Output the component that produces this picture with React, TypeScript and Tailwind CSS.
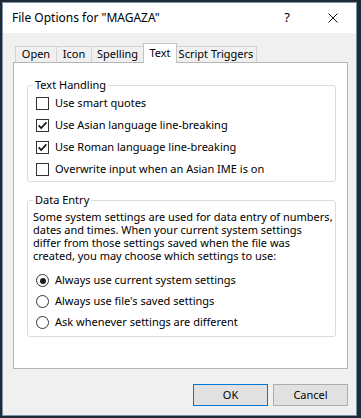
import React from 'react';

const Checkbox = ({ checked }: { checked?: boolean }) => (
  <span className="w-[13px] h-[13px] border border-[#333333] bg-white flex items-center justify-center shrink-0">
    {checked && (
      <svg width="11" height="11" viewBox="0 0 11 11">
        <path d="M1.6 5.4 L4.2 8.1 L9.4 2.4" fill="none" stroke="#111" strokeWidth="1.6" />
      </svg>
    )}
  </span>
);

const Radio = ({ checked }: { checked?: boolean }) => (
  <span className="w-[13px] h-[13px] rounded-full border border-[#333333] bg-white flex items-center justify-center shrink-0">
    {checked && <span className="w-[6px] h-[6px] rounded-full bg-[#1a1a1a]" />}
  </span>
);

const tabs = [
  { label: 'Open', w: 'w-[42px]' },
  { label: 'Icon', w: 'w-[36px]' },
  { label: 'Spelling', w: 'w-[53px]' },
  { label: 'Text', w: 'w-[34px]', active: true },
  { label: 'Script Triggers', w: 'w-[82px]' },
];

const App = () => {
  return (
    <div className="w-[361px] h-[418px] bg-[#1e2a36] pl-[2px] pt-[2px] font-['Noto_Sans',sans-serif] text-[11px] text-black">
      <div className="w-[355px] h-[414px] border border-[#7f93a8] bg-[#f0f0f0] flex flex-col">
        {/* title bar */}
        <div className="h-[30px] bg-white flex items-center shrink-0">
          <span className="flex-1 pl-[9px] text-[12px]">File Options for "MAGAZA"</span>
          <span className="w-[46px] text-center text-[13px]">?</span>
          <span className="w-[46px] flex justify-center">
            <svg width="10" height="10" viewBox="0 0 10 10">
              <path d="M0.5 0.5 L9.5 9.5 M9.5 0.5 L0.5 9.5" stroke="#111" strokeWidth="1" />
            </svg>
          </span>
        </div>

        <div className="pl-[10px] pr-[8px] pt-[10px]">
          {/* tabs */}
          <div className="flex items-end h-[19px] ml-[2px]">
            {tabs.map((t) =>
              t.active ? (
                <div
                  key={t.label}
                  className={`${t.w} h-[20px] -mb-px relative z-10 bg-white border border-b-0 border-[#c4c4c4] flex items-center justify-center -mx-px`}
                >
                  {t.label}
                </div>
              ) : (
                <div
                  key={t.label}
                  className={`${t.w} h-[16px] bg-[#f0f0f0] border border-b-0 border-[#d4d4d4] -ml-px first:ml-0 flex items-center justify-center`}
                >
                  {t.label}
                </div>
              )
            )}
          </div>

          {/* panel */}
          <div className="h-[307px] bg-white border border-[#b4b4b4] pl-[13px] pr-[11px] pt-[15px]">
            <fieldset className="border border-[#dcdcdc] rounded-[3px] pl-[5px] pb-[1px]">
              <legend className="px-[2px] leading-[14px]">Text Handling</legend>
              {[
                { label: 'Use smart quotes' },
                { label: 'Use Asian language line-breaking', checked: true },
                { label: 'Use Roman language line-breaking', checked: true },
                { label: 'Overwrite input when an Asian IME is on' },
              ].map((r) => (
                <div key={r.label} className="h-[22px] flex items-center gap-[6px] pl-[3px]">
                  <Checkbox checked={r.checked} />
                  <span>{r.label}</span>
                </div>
              ))}
            </fieldset>

            <fieldset className="mt-[11px] border border-[#dcdcdc] rounded-[3px] pl-[5px] pb-[3px]">
              <legend className="px-[2px] leading-[14px]">Data Entry</legend>
              <p className="leading-[13px] whitespace-nowrap mt-[3px]">
                Some system settings are used for data entry of numbers,
                <br />
                dates and times. When your current system settings
                <br />
                differ from those settings saved when the file was
                <br />
                created, you may choose which settings to use:
              </p>
              <div className="mt-[8px]">
                {[
                  { label: 'Always use current system settings', checked: true },
                  { label: "Always use file's saved settings" },
                  { label: 'Ask whenever settings are different' },
                ].map((r) => (
                  <div key={r.label} className="h-[21px] flex items-center gap-[6px] pl-[3px]">
                    <Radio checked={r.checked} />
                    <span>{r.label}</span>
                  </div>
                ))}
              </div>
            </fieldset>
          </div>

          {/* buttons */}
          <div className="flex justify-end gap-[5px] mt-[15px]">
            <button className="w-[75px] h-[22px] bg-[#e1e1e1] border border-[#0078d7] text-[11px]">OK</button>
            <button className="w-[75px] h-[22px] bg-[#e1e1e1] border border-[#adadad] text-[11px]">Cancel</button>
          </div>
        </div>
      </div>
    </div>
  );
};

export default App;
